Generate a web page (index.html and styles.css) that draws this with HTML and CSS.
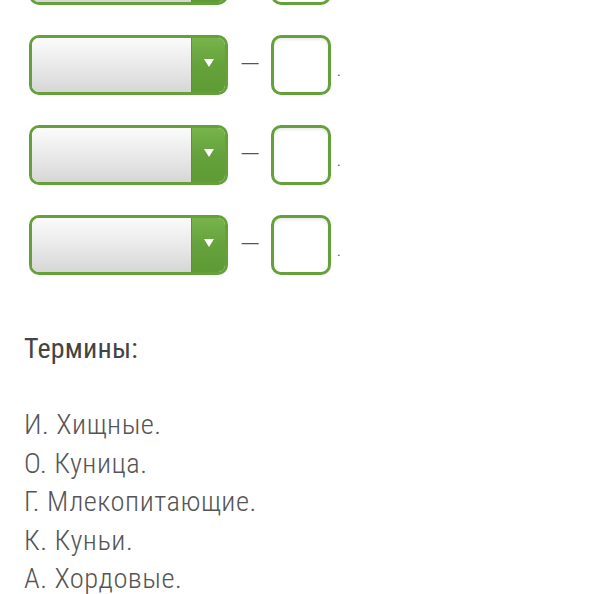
FILE: index.html
```html
<!DOCTYPE html>
<html lang="ru">
  <head>
    <meta charset="UTF-8" />
    <meta name="viewport" content="width=device-width, initial-scale=1.0" />
    <title>Термины</title>
    <link rel="stylesheet" href="styles.css">
  </head>
  <body>
    <div class="answers">
      <div class="row">
        <div class="pick"><div class="field"></div><div class="arrow"><span class="tri"></span></div></div>
        <span class="dash">—</span>
        <div class="box"></div>
        <span class="dot">.</span>
      </div>
      <div class="row">
        <div class="pick"><div class="field"></div><div class="arrow"><span class="tri"></span></div></div>
        <span class="dash">—</span>
        <div class="box"></div>
        <span class="dot">.</span>
      </div>
      <div class="row">
        <div class="pick"><div class="field"></div><div class="arrow"><span class="tri"></span></div></div>
        <span class="dash">—</span>
        <div class="box"></div>
        <span class="dot">.</span>
      </div>
      <div class="row">
        <div class="pick"><div class="field"></div><div class="arrow"><span class="tri"></span></div></div>
        <span class="dash">—</span>
        <div class="box"></div>
        <span class="dot">.</span>
      </div>
    </div>

    <h3 class="title">Термины:</h3>
    <div class="terms">
      <div>И. Хищные.</div>
      <div>О. Куница.</div>
      <div>Г. Млекопитающие.</div>
      <div>К. Куньи.</div>
      <div>А. Хордовые.</div>
    </div>
  </body>
</html>
```

FILE: styles.css
```css
body{
    margin: 0;
    padding: 0 0 0 24px;
    background-color: #fff;
    font-family: 'Roboto Condensed', 'Roboto', 'Liberation Sans', sans-serif;
    overflow: hidden;
}
.answers{
    margin-top: -55px;
    padding-left: 5px;
    display: flex;
    flex-direction: column;
    gap: 30px;
}
.row{
    display: flex;
    align-items: center;
    height: 60px;
}
.pick{
    width: 199px;
    height: 60px;
    box-sizing: border-box;
    border: 3px solid #64a13a;
    border-radius: 10px;
    overflow: hidden;
    display: flex;
}
.field{
    flex: 1;
    background: linear-gradient(#fbfbfb, #e6e6e6 60%, #d6d6d6);
    border-right: 1px solid #5a9432;
}
.arrow{
    width: 33px;
    background: linear-gradient(#78b34b, #65a23b 50%, #5e9b35);
    display: flex;
    align-items: center;
    justify-content: center;
}
.tri{
    width: 0;
    height: 0;
    border-left: 5px solid transparent;
    border-right: 5px solid transparent;
    border-top: 8px solid #fff;
    margin-bottom: 4px;
}
.dash{
    margin-left: 12px;
    width: 31px;
    font-family: 'Roboto', sans-serif;
    font-size: 26px;
    font-weight: 300;
    color: #555;
    padding-bottom: 2px;
}
.box{
    width: 60px;
    height: 60px;
    box-sizing: border-box;
    border: 3px solid #64a13a;
    border-radius: 10px;
    box-shadow: inset 0 2px 3px rgba(0, 0, 0, 0.08);
}
.dot{
    margin-left: 6px;
    padding-top: 12px;
    font-size: 14px;
    color: #555;
}
.title{
    margin: 55px 0 0 0;
    font-size: 28px;
    font-weight: 400;
    line-height: 38px;
    letter-spacing: 0.2px;
    color: #444;
}
.terms{
    margin-top: 38px;
    font-size: 28.5px;
    font-weight: 300;
    line-height: 38.5px;
    letter-spacing: 0.5px;
    color: #555;
}
```
